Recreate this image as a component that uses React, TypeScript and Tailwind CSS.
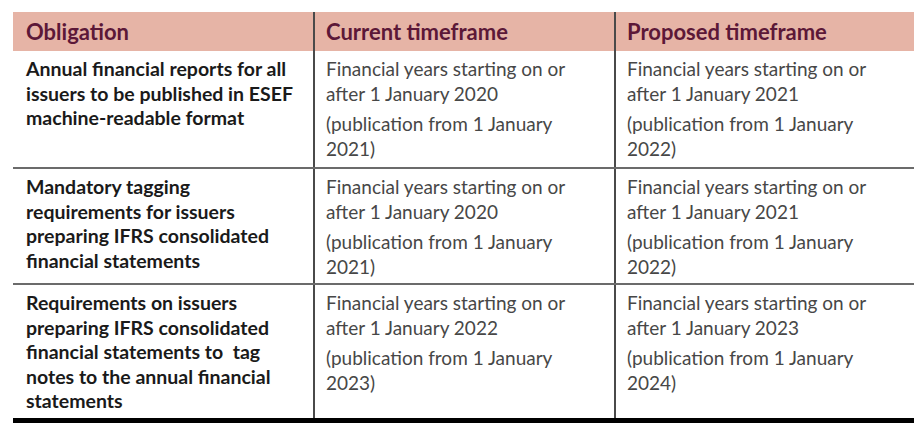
import React from "react";

const rows = [
  {
    ob: ["Annual financial reports for all", "issuers to be published in ESEF", "machine-readable format"],
    cur: [["Financial years starting on or", "after 1 January 2020"], ["(publication from 1 January", "2021)"]],
    prop: [["Financial years starting on or", "after 1 January 2021"], ["(publication from 1 January", "2022)"]],
    h: "h-[118px]",
  },
  {
    ob: ["Mandatory tagging", "requirements for issuers", "preparing IFRS consolidated", "financial statements"],
    cur: [["Financial years starting on or", "after 1 January 2020"], ["(publication from 1 January", "2021)"]],
    prop: [["Financial years starting on or", "after 1 January 2021"], ["(publication from 1 January", "2022)"]],
    h: "h-[116px]",
  },
  {
    ob: [
      "Requirements on issuers",
      "preparing IFRS consolidated",
      "financial statements to  tag",
      "notes to the annual financial",
      "statements",
    ],
    cur: [["Financial years starting on or", "after 1 January 2022"], ["(publication from 1 January", "2023)"]],
    prop: [["Financial years starting on or", "after 1 January 2023"], ["(publication from 1 January", "2024)"]],
    h: "h-[138px]",
  },
];

function Lines({ lines }: { lines: string[] }) {
  return (
    <>
      {lines.map((l, i) => (
        <span key={i} className="block whitespace-pre">
          {l}
        </span>
      ))}
    </>
  );
}

function Dates({ paras }: { paras: string[][] }) {
  return (
    <div className="border-l-2 border-[#4a4a4a] pl-[11px] pt-[6px] text-[19px] leading-[24.5px] text-[#474747]">
      <p>
        <Lines lines={paras[0]} />
      </p>
      <p className="mt-[6px]">
        <Lines lines={paras[1]} />
      </p>
    </div>
  );
}

export default function App() {
  return (
    <div className="w-[921px] h-[433px] overflow-hidden bg-white pt-[12px]" style={{ fontFamily: "Lato, 'Noto Sans', sans-serif" }}>
      <div className="ml-[13px] w-[901px]">
        <div className="grid grid-cols-[300px_301px_300px] h-[39px] bg-[#e6b4a6] text-[22px] font-bold text-[#5c1838]">
          <div className="flex items-center pl-[13px]">Obligation</div>
          <div className="flex items-center border-l-2 border-[#4a4a4a] pl-[11px]">Current timeframe</div>
          <div className="flex items-center border-l-2 border-[#4a4a4a] pl-[11px]">Proposed timeframe</div>
        </div>
        {rows.map((r, i) => (
          <div
            key={i}
            className={`grid grid-cols-[300px_301px_300px] ${r.h} ${i < rows.length - 1 ? "border-b-2 border-[#6b6b6b]" : "border-b-[5px] border-black"}`}
          >
            <div className="pl-[13px] pt-[6px] text-[19.5px] font-bold leading-[24.5px] text-[#1a1a1a]">
              <Lines lines={r.ob} />
            </div>
            <Dates paras={r.cur} />
            <Dates paras={r.prop} />
          </div>
        ))}
      </div>
    </div>
  );
}
